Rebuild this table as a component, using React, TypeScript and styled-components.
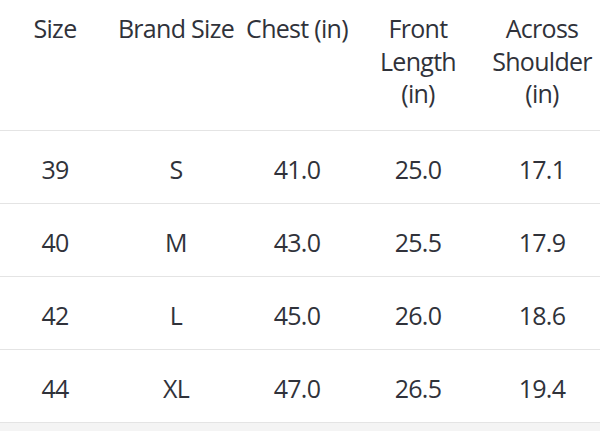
import React from "react";
import styled, { createGlobalStyle } from "styled-components";

const Global = createGlobalStyle`
  html, body { margin: 0; padding: 0; background: #f4f4f4; }
  body { font-family: "Open Sans", "Noto Sans", sans-serif; color: #30323a; }
`;

const Page = styled.div`
  width: 600px;
  background: #ffffff;
`;

const Table = styled.table`
  width: 600px;
  border-collapse: collapse;
  table-layout: fixed;
  font-size: 25px;
  letter-spacing: -0.7px;
`;

const HeadCell = styled.th`
  font-weight: 400;
  text-align: center;
  vertical-align: top;
  line-height: 32.5px;
  padding: 12px 0 20px;
  border-bottom: 1.5px solid #e4e4e4;
  white-space: normal;
`;

const Row = styled.tr`
  height: 73px;
  border-bottom: 1.5px solid #e4e4e4;
`;

const Cell = styled.td`
  text-align: center;
  vertical-align: middle;
  padding: 4px 0 0;
  line-height: 30px;
`;

const columns = [
  { key: "size", label: "Size", width: 110 },
  { key: "brand", label: "Brand Size", width: 132 },
  { key: "chest", label: "Chest (in)", width: 110 },
  { key: "front", label: "Front Length (in)", width: 132 },
  { key: "shoulder", label: "Across Shoulder (in)", width: 116 },
];

const rows = [
  ["39", "S", "41.0", "25.0", "17.1"],
  ["40", "M", "43.0", "25.5", "17.9"],
  ["42", "L", "45.0", "26.0", "18.6"],
  ["44", "XL", "47.0", "26.5", "19.4"],
];

const headLines: Record<string, string[]> = {
  size: ["Size"],
  brand: ["Brand Size"],
  chest: ["Chest (in)"],
  front: ["Front", "Length", "(in)"],
  shoulder: ["Across", "Shoulder", "(in)"],
};

const Line = styled.span`
  display: block;
  white-space: nowrap;
`;

export default function App() {
  return (
    <Page>
      <Global />
      <Table>
        <colgroup>
          {columns.map((c) => (
            <col key={c.key} style={{ width: c.width }} />
          ))}
        </colgroup>
        <thead>
          <tr>
            {columns.map((c) => (
              <HeadCell key={c.key}>
                {headLines[c.key].map((l) => (
                  <Line key={l}>{l}</Line>
                ))}
              </HeadCell>
            ))}
          </tr>
        </thead>
        <tbody>
          {rows.map((r) => (
            <Row key={r[0]}>
              {r.map((v, i) => (
                <Cell key={i}>{v}</Cell>
              ))}
            </Row>
          ))}
        </tbody>
      </Table>
    </Page>
  );
}
